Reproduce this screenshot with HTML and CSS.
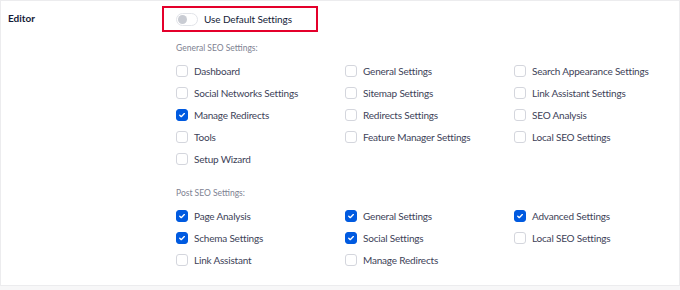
FILE: index.html
```html
<!DOCTYPE html>
<html>
<head>
<meta charset="utf-8">
<link rel="stylesheet" href="styles.css">
</head>
<body>
<div class="card">
  <div class="row-label">Editor</div>
  <div class="row-content">
    <div class="highlight">
      <span class="toggle"><span class="knob"></span></span>
      <span class="toggle-text">Use Default Settings</span>
    </div>

    <div class="group-title">General SEO Settings:</div>
    <div class="options">
      <label class="opt"><span class="cb"></span>Dashboard</label>
      <label class="opt"><span class="cb"></span>General Settings</label>
      <label class="opt"><span class="cb"></span>Search Appearance Settings</label>
      <label class="opt"><span class="cb"></span>Social Networks Settings</label>
      <label class="opt"><span class="cb"></span>Sitemap Settings</label>
      <label class="opt"><span class="cb"></span>Link Assistant Settings</label>
      <label class="opt"><span class="cb on"><svg viewBox="0 0 12 12"><path d="M3.3 6.2 5.1 8 8.8 4.3" /></svg></span>Manage Redirects</label>
      <label class="opt"><span class="cb"></span>Redirects Settings</label>
      <label class="opt"><span class="cb"></span>SEO Analysis</label>
      <label class="opt"><span class="cb"></span>Tools</label>
      <label class="opt"><span class="cb"></span>Feature Manager Settings</label>
      <label class="opt"><span class="cb"></span>Local SEO Settings</label>
      <label class="opt"><span class="cb"></span>Setup Wizard</label>
    </div>

    <div class="group-title post">Post SEO Settings:</div>
    <div class="options">
      <label class="opt"><span class="cb on"><svg viewBox="0 0 12 12"><path d="M3.3 6.2 5.1 8 8.8 4.3" /></svg></span>Page Analysis</label>
      <label class="opt"><span class="cb on"><svg viewBox="0 0 12 12"><path d="M3.3 6.2 5.1 8 8.8 4.3" /></svg></span>General Settings</label>
      <label class="opt"><span class="cb on"><svg viewBox="0 0 12 12"><path d="M3.3 6.2 5.1 8 8.8 4.3" /></svg></span>Advanced Settings</label>
      <label class="opt"><span class="cb on"><svg viewBox="0 0 12 12"><path d="M3.3 6.2 5.1 8 8.8 4.3" /></svg></span>Schema Settings</label>
      <label class="opt"><span class="cb on"><svg viewBox="0 0 12 12"><path d="M3.3 6.2 5.1 8 8.8 4.3" /></svg></span>Social Settings</label>
      <label class="opt"><span class="cb"></span>Local SEO Settings</label>
      <label class="opt"><span class="cb"></span>Link Assistant</label>
      <label class="opt"><span class="cb"></span>Manage Redirects</label>
    </div>
  </div>
</div>
</body>
</html>
```

FILE: styles.css
```css
html, body {
  margin: 0;
  padding: 0;
}
body {
  background: #f7f7f8;
  font-family: Lato, "Open Sans", sans-serif;
  width: 680px;
  height: 290px;
  overflow: hidden;
}
.card {
  box-sizing: border-box;
  width: 680px;
  height: 286px;
  background: #fff;
  border: 1px solid #ececee;
  display: grid;
  grid-template-columns: 175px 1fr;
  padding-top: 5px;
}
.row-label {
  padding-left: 7px;
  padding-top: 4px;
  font-size: 10px;
  line-height: 16px;
  font-weight: 700;
  color: #141b38;
}
.row-content {
  display: flex;
  flex-direction: column;
  align-items: flex-start;
}
.highlight {
  display: flex;
  align-items: center;
  gap: 6px;
  height: 22px;
  margin-left: -14px;
  padding: 0 24px 0 12px;
  border: 2px solid #e4002b;
}
.toggle {
  box-sizing: border-box;
  width: 22px;
  height: 13px;
  border: 1px solid #e2e4e9;
  border-radius: 7px;
  background: #fff;
  display: flex;
  align-items: center;
  padding-left: 1px;
}
.knob {
  width: 9px;
  height: 9px;
  border-radius: 50%;
  background: #c9ccd3;
}
.toggle-text {
  font-size: 10px;
  letter-spacing: -0.1px;
  color: #141b38;
}
.group-title {
  margin-top: 10px;
  font-size: 8.5px;
  line-height: 13px;
  color: #7e8292;
}
.group-title.post {
  margin-top: 17px;
}
.options {
  margin-top: 5px;
  display: grid;
  grid-template-columns: 169px 169px 160px;
  grid-auto-rows: 22px;
}
.opt {
  display: flex;
  align-items: center;
  gap: 6px;
  font-size: 10px;
  letter-spacing: -0.2px;
  color: #3d4258;
  white-space: nowrap;
}
.cb {
  box-sizing: border-box;
  flex: none;
  width: 12px;
  height: 12px;
  border: 1px solid #d4d6dd;
  border-radius: 3px;
  background: #fff;
  display: flex;
}
.cb.on {
  background: #005ae0;
  border-color: #005ae0;
}
.cb svg {
  width: 10px;
  height: 10px;
  fill: none;
  stroke: #fff;
  stroke-width: 1.6;
  stroke-linecap: round;
  stroke-linejoin: round;
}
```
